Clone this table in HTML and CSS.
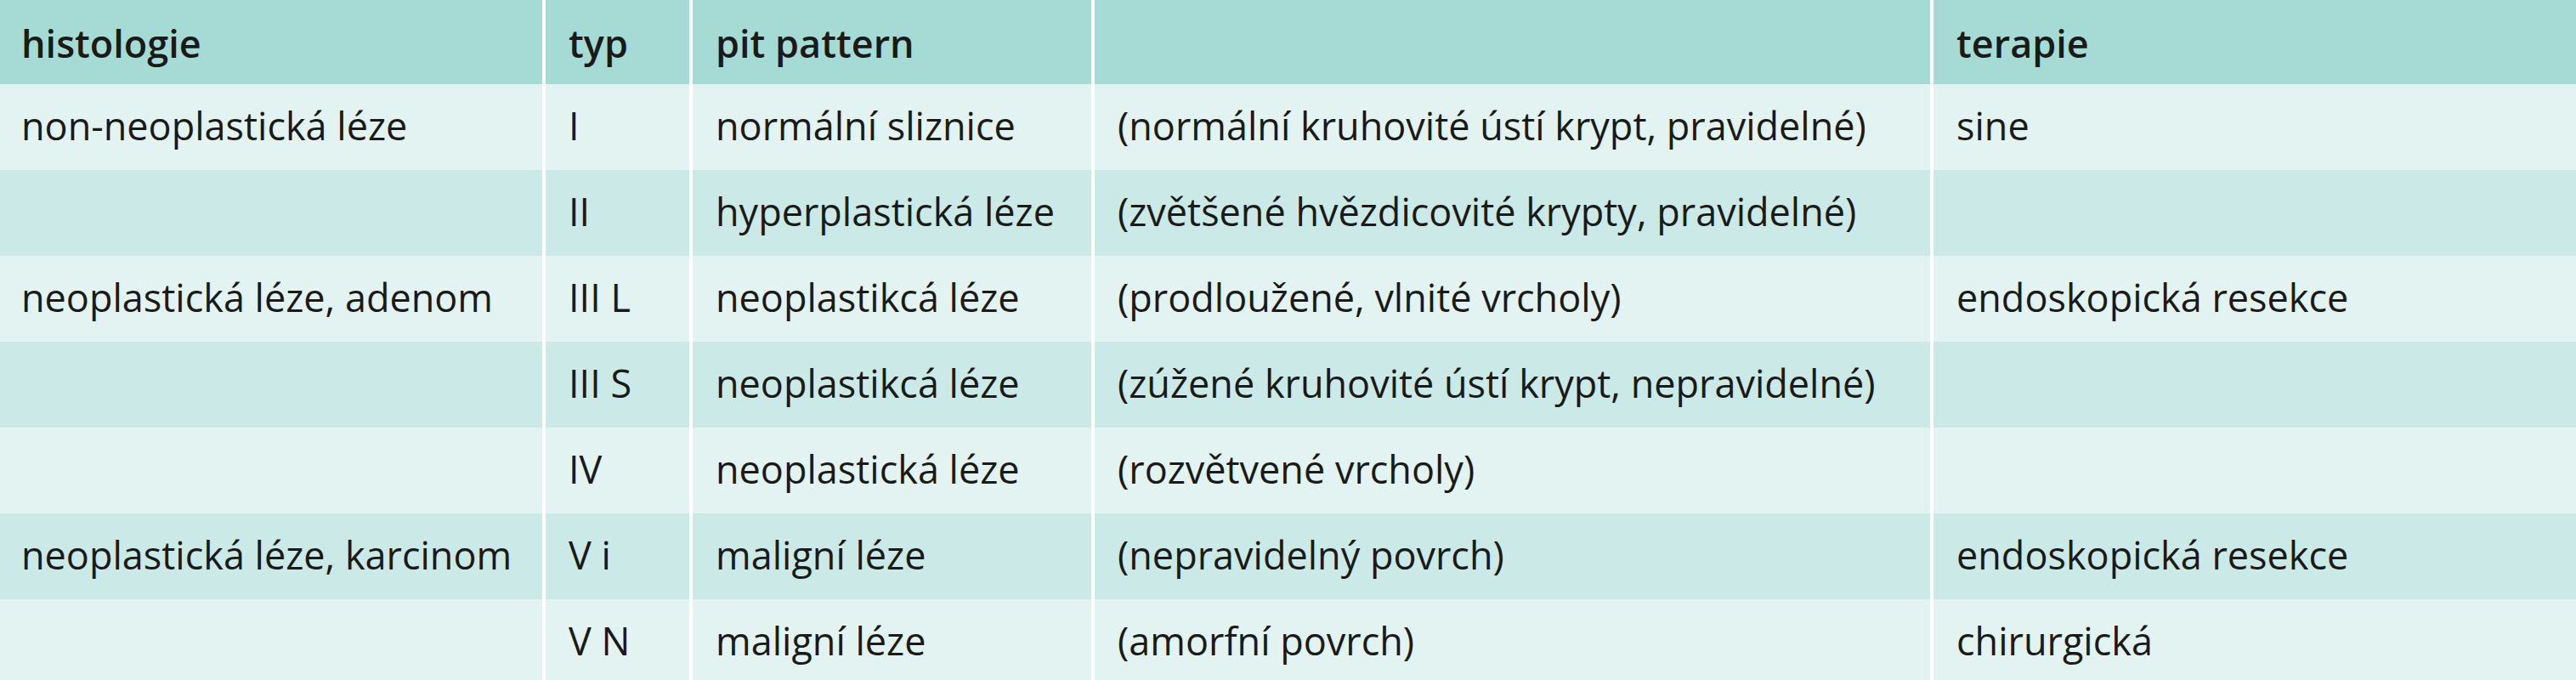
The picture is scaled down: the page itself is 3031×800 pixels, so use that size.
FILE: index.html
```html
<!DOCTYPE html>
<html lang="cs">
<head>
<meta charset="utf-8">
<title>Pit pattern</title>
<link rel="stylesheet" href="styles.css">
</head>
<body>
<div class="table">
  <div class="row head">
    <div class="cell">histologie</div>
    <div class="cell">typ</div>
    <div class="cell">pit pattern</div>
    <div class="cell"></div>
    <div class="cell">terapie</div>
  </div>
  <div class="row light">
    <div class="cell">non-neoplastická léze</div>
    <div class="cell">I</div>
    <div class="cell">normální sliznice</div>
    <div class="cell">(normální kruhovité ústí krypt, pravidelné)</div>
    <div class="cell">sine</div>
  </div>
  <div class="row dark">
    <div class="cell"></div>
    <div class="cell">II</div>
    <div class="cell">hyperplastická léze</div>
    <div class="cell">(zvětšené hvězdicovité krypty, pravidelné)</div>
    <div class="cell"></div>
  </div>
  <div class="row light">
    <div class="cell">neoplastická léze, adenom</div>
    <div class="cell">III L</div>
    <div class="cell">neoplastikcá léze</div>
    <div class="cell">(prodloužené, vlnité vrcholy)</div>
    <div class="cell">endoskopická resekce</div>
  </div>
  <div class="row dark">
    <div class="cell"></div>
    <div class="cell">III S</div>
    <div class="cell">neoplastikcá léze</div>
    <div class="cell">(zúžené kruhovité ústí krypt, nepravidelné)</div>
    <div class="cell"></div>
  </div>
  <div class="row light">
    <div class="cell"></div>
    <div class="cell">IV</div>
    <div class="cell">neoplastická léze</div>
    <div class="cell">(rozvětvené vrcholy)</div>
    <div class="cell"></div>
  </div>
  <div class="row dark">
    <div class="cell">neoplastická léze, karcinom</div>
    <div class="cell">V i</div>
    <div class="cell">maligní léze</div>
    <div class="cell">(nepravidelný povrch)</div>
    <div class="cell">endoskopická resekce</div>
  </div>
  <div class="row light">
    <div class="cell">&nbsp;</div>
    <div class="cell">V N</div>
    <div class="cell">maligní léze</div>
    <div class="cell">(amorfní povrch)</div>
    <div class="cell">chirurgická</div>
  </div>
</div>
</body>
</html>
```

FILE: styles.css
```css
html, body {
  margin: 0;
  padding: 0;
  background: #ffffff;
}

body {
  width: 3031px;
  height: 800px;
  overflow: hidden;
  font-family: "Open Sans", "Noto Sans", sans-serif;
  font-size: 45px;
  color: #1a1a18;
}

.table {
  display: grid;
  grid-template-columns: 638px 169px 469px 983px 756px;
  grid-auto-rows: 101px;
  grid-template-rows: 99px;
  column-gap: 4px;
  background: #ffffff;
}

.row {
  display: contents;
}

.cell {
  display: flex;
  align-items: center;
  padding: 0 0 4px 27px;
  white-space: nowrap;
  box-sizing: border-box;
}

.cell:first-child {
  padding-left: 25px;
}

.head .cell {
  background: #a6dad5;
  font-weight: 600;
  padding-bottom: 0;
  padding-top: 2px;
}

.light .cell {
  background: #e3f3f1;
}

.dark .cell {
  background: #cbe9e6;
}
```
